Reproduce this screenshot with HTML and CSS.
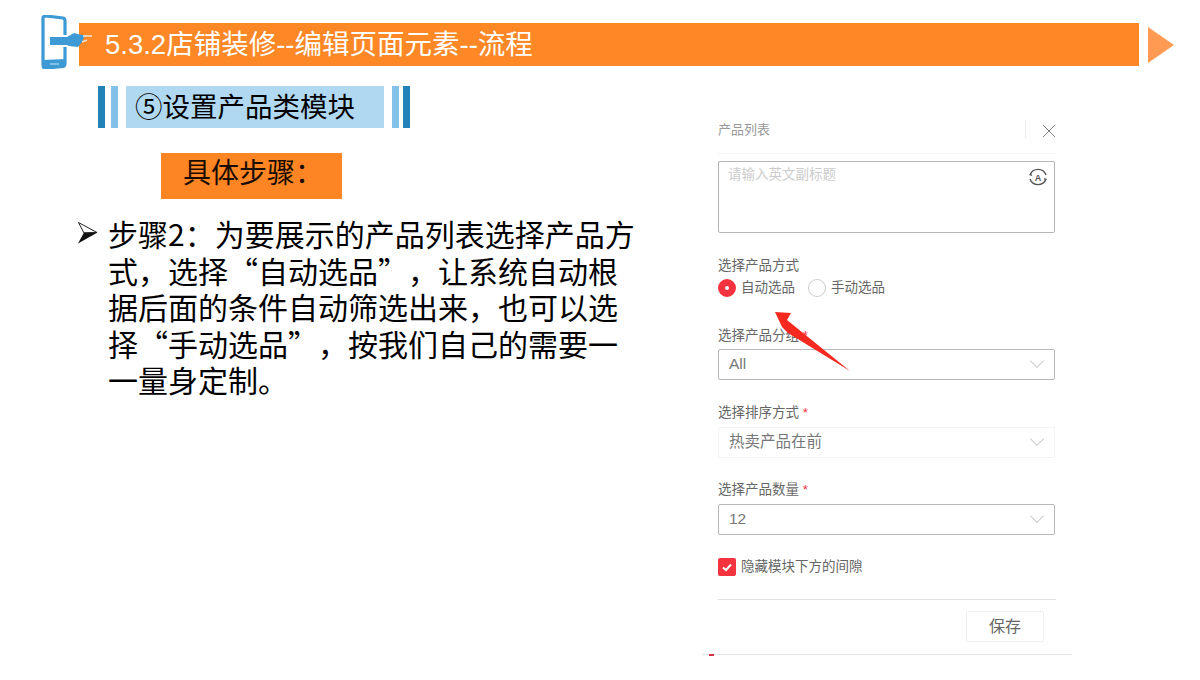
FILE: index.html
```html
<!DOCTYPE html>
<html lang="zh-CN">
<head>
    <meta charset="UTF-8">
    <title>5.3.2店铺装修--编辑页面元素--流程</title>
    <link rel="stylesheet" href="styles.css">
</head>
<body>
    <div class="slide">
        <header class="slide-head">
            <svg class="phone-icon" width="52" height="54" viewBox="0 0 52 54">
                <path d="M2 3 Q2 1 5 1 L22 3 Q24 3.500 24 6 L24 20" fill="none" stroke="#3d9ad4" stroke-width="3.200"/>
                <path d="M24 32 L24 48 Q24 51 22 51.500 L5 53 Q2 53.500 2 50 L2 3" fill="none" stroke="#3d9ad4" stroke-width="3.200"/>
                <path d="M1 45 L25 44 L25 50 Q25 52 22 52 L5 54 Q1 54 1 50 Z" fill="#3d9ad4"/>
                <path d="M9 49 H18" stroke="#cfe6f5" stroke-width="1"/>
                <path d="M9 22 H26 L33 18 Q38 20 44 20 L41 27 L37 32 L28 31 L26 30 H9 Z" fill="#3d9ad4"/>
                <path d="M42 21 L51 21" stroke="#f6e3d2" stroke-width="1.600"/>
                <path d="M41 27 L46 25" stroke="#f6e3d2" stroke-width="1.400"/>
            </svg>
            <div class="head-bar">5.3.2店铺装修--编辑页面元素--流程</div>
            <div class="head-arrow"></div>
        </header>

        <main class="slide-body">
            <section class="left-col">
                <div class="module-title">
                    <span class="bar dark"></span>
                    <span class="bar light"></span>
                    <h2>⑤设置产品类模块</h2>
                    <span class="bar light"></span>
                    <span class="bar dark"></span>
                </div>
                <div class="steps-label">具体步骤：</div>
                <div class="step-item">
                    <svg class="bullet" width="20" height="22" viewBox="0 0 20 22">
                        <path d="M0.500 0.500 L19 10.500 L6 11 Z" fill="#fff" stroke="#222"/>
                        <path d="M6 10.500 L19.500 10.500 L0 21.500 Z" fill="#111"/>
                    </svg>
                    <p>步骤2：为要展示的产品列表选择产品方<br>式，选择“自动选品”，让系统自动根<br>据后面的条件自动筛选出来，也可以选<br>择“手动选品”，按我们自己的需要一<br>一量身定制。</p>
                </div>
            </section>

            <section class="panel">
                <div class="panel-head">
                    <span>产品列表</span>
                    <svg class="close-icon" width="46" height="22" viewBox="0 0 46 22">
                        <path d="M15.500 0 V19" stroke="#eeeeee"/>
                        <path d="M33 5 L45 17 M45 5 L33 17" stroke="#808080" fill="none"/>
                    </svg>
                </div>
                <div class="text-box">
                    <span>请输入英文副标题</span>
                    <svg width="20" height="20" viewBox="0 0 20 20">
                        <path d="M2 8 A8.500 8.500 0 0 1 18 8 M18 12 A8.500 8.500 0 0 1 2 12" fill="none" stroke="#555" stroke-width="1.400"/>
                        <path d="M1 8 L3.500 6.500 L4 9 Z M19 12 L16.500 13.500 L16 11 Z" fill="#555"/>
                        <text x="10" y="13.500" text-anchor="middle" class="translate-a">A</text>
                    </svg>
                </div>

                <div class="field-label first">选择产品方式</div>
                <div class="radio-row">
                    <span class="radio checked"></span><span>自动选品</span>
                    <span class="radio"></span><span>手动选品</span>
                </div>

                <div class="field-label group">选择产品分组 <em>*</em></div>
                <div class="select group">All<i class="chevron"></i></div>

                <div class="field-label sort">选择排序方式 <em>*</em></div>
                <div class="select faint">热卖产品在前<i class="chevron"></i></div>

                <div class="field-label">选择产品数量 <em>*</em></div>
                <div class="select">12<i class="chevron"></i></div>

                <div class="check-row">
                    <svg width="18" height="18" viewBox="0 0 18 18">
                        <rect width="18" height="18" rx="2" fill="#f5333f"/>
                        <path d="M5 9.500 L8 12 L13 6.500" fill="none" stroke="#fff" stroke-width="2"/>
                    </svg>
                    <span>隐藏模块下方的间隙</span>
                </div>

                <div class="panel-foot">
                    <div class="save-btn">保存</div>
                </div>
                <div class="panel-end"></div>
            </section>
        </main>

        <!-- 红色箭头 -->
        <svg class="red-arrow" width="80" height="64" viewBox="0 0 80 64">
            <path d="M1 1 L17 2 L13 9 L76 60 L14 22 L8 16 Z" fill="#f5291f"/>
        </svg>
    </div>
</body>
</html>
```

FILE: styles.css
```css
* {
    box-sizing: border-box;
}
body {
    margin: 0;
    background-color: #fff;
    font-family: "Liberation Sans", "Noto Sans CJK SC", sans-serif;
    color: #000;
}
.slide {
    position: relative;
    width: 1200px;
    height: 680px;
    overflow: hidden;
}

/* header */
.slide-head {
    display: flex;
    align-items: flex-start;
    padding: 15px 0 0 41px;
    height: 69px;
}
.phone-icon {
    position: absolute;
    left: 41px;
    top: 15px;
    z-index: 1;
}
.head-bar {
    width: 1060px;
    height: 43px;
    margin: 8px 0 0 38px;
    padding-left: 26px;
    background-color: #fe8726;
    color: #fff;
    font-size: 27.500px;
    line-height: 43px;
    white-space: nowrap;
}
.head-arrow {
    margin: 12px 0 0 9px;
    border-left: 26px solid #fe9a51;
    border-top: 18px solid transparent;
    border-bottom: 18px solid transparent;
}

/* body */
.slide-body {
    display: flex;
    margin-top: 17px;
}
.left-col {
    width: 702px;
}
.module-title {
    display: flex;
    margin-left: 98px;
    height: 42px;
}
.bar {
    width: 7px;
    margin-right: 6px;
}
.bar.dark {
    background-color: #2382b8;
}
.bar.light {
    background-color: #83c1e8;
}
.module-title .bar:nth-child(2) {
    margin-right: 8px;
}
.module-title .bar:nth-child(4) {
    margin-left: 8px;
    margin-right: 4px;
}
.module-title .bar:last-child {
    margin-right: 0;
}
.module-title h2 {
    width: 258px;
    margin: 0;
    padding-left: 9px;
    background-color: #b0d9f1;
    font-size: 27.500px;
    font-weight: normal;
    line-height: 44px;
    white-space: nowrap;
}
.steps-label {
    width: 181px;
    height: 46px;
    margin: 25px 0 0 161px;
    padding-left: 22px;
    background-color: #fe8524;
    color: #1a0d00;
    font-size: 28px;
    line-height: 42px;
}
.step-item {
    display: flex;
    margin: 16px 0 0 78px;
}
.bullet {
    flex: none;
    margin: 7px 10px 0 0;
}
.step-item p {
    margin: 0;
    font-family: "Noto Sans CJK SC", sans-serif;
    font-size: 30px;
    line-height: 36.500px;
    white-space: nowrap;
    text-spacing-trim: space-all;
}

/* product panel */
.panel {
    position: relative;
    width: 370px;
    padding: 34px 16px 0;
    font-size: 13.500px;
    color: #666;
}
.panel-head {
    display: flex;
    justify-content: space-between;
    width: 338px;
    height: 34px;
    border-bottom: 1px solid #f6f6f6;
    color: #999;
    font-size: 13px;
    line-height: 20px;
}
.text-box {
    display: flex;
    justify-content: space-between;
    width: 337px;
    height: 72px;
    margin-top: 7px;
    padding: 1px 6px 0 9px;
    border: 1px solid #b5b5b5;
    border-radius: 2px;
    color: #ccc;
    font-size: 13.500px;
}
.text-box svg {
    margin-top: 4px;
}
.translate-a {
    font-size: 9px;
    font-weight: bold;
    fill: #555;
}
.field-label {
    height: 18px;
    margin-top: 23px;
    line-height: 18px;
}
.field-label.first {
    margin-top: 24px;
}
.field-label.group {
    margin-top: 30px;
}
.field-label.sort {
    margin-top: 24px;
}
.field-label em {
    color: #f5333f;
    font-style: normal;
}
.radio-row {
    display: flex;
    align-items: center;
    height: 18px;
    margin-top: 4px;
    line-height: 16px;
}
.radio {
    width: 18px;
    height: 18px;
    margin-right: 5px;
    border: 1px solid #ccc;
    border-radius: 50%;
}
.radio-row span:nth-child(3) {
    margin-left: 13px;
}
.radio.checked {
    border: 7px solid #f5333f;
    background-color: #fff;
}
.select {
    position: relative;
    width: 337px;
    height: 31px;
    margin-top: 5px;
    padding-left: 10px;
    border: 1px solid #b8b8b8;
    border-radius: 2px;
    font-size: 15.500px;
    line-height: 28px;
    color: #777;
}
.select.group {
    margin-top: 4px;
}
.select.faint {
    border-color: #f3f3f3;
}
.chevron {
    position: absolute;
    right: 12px;
    top: 6px;
    width: 10px;
    height: 10px;
    border-right: 1px solid #ccc;
    border-bottom: 1px solid #ccc;
    transform: rotate(45deg);
}
.check-row {
    display: flex;
    align-items: center;
    gap: 5px;
    height: 18px;
    margin-top: 23px;
    line-height: 16px;
}
.panel-foot {
    display: flex;
    justify-content: flex-end;
    width: 338px;
    margin-top: 23px;
    padding: 11px 12px 12px 0;
    border-top: 1px solid #e2e2e2;
}
.save-btn {
    width: 78px;
    height: 31px;
    border: 1px solid #eeeeee;
    border-radius: 2px;
    font-size: 16px;
    line-height: 30px;
    text-align: center;
}
.panel-end {
    position: relative;
    margin: 0 -16px;
    border-top: 1px solid #e5e5e5;
}
.panel-end::before {
    content: "";
    position: absolute;
    left: 7px;
    top: -1px;
    width: 5px;
    height: 2px;
    background-color: #d9304a;
}
.red-arrow {
    position: absolute;
    left: 774px;
    top: 311px;
}
```
